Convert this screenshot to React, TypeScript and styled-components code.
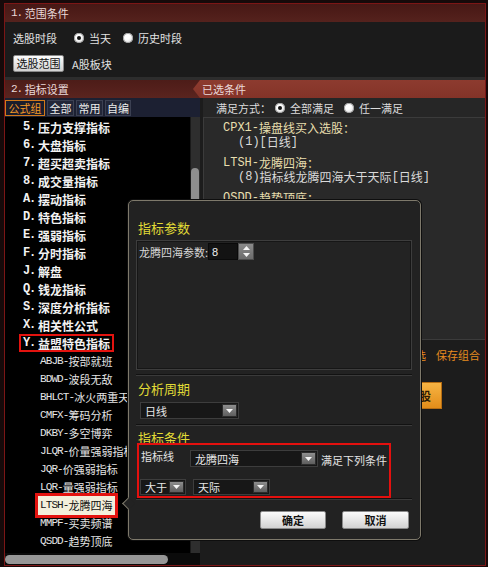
import React from "react";
import styled, { createGlobalStyle, css } from "styled-components";

const GlobalStyle = createGlobalStyle`
  html, body { margin: 0; padding: 0; background: #160a0a; }
  body {
    font-family: "Noto Sans CJK SC", "Noto Sans", sans-serif;
    font-size: 11px;
    color: #e0e0e0;
  }
  #root { width: 488px; height: 567px; }
`;

const Page = styled.div`
  width: 488px;
  height: 567px;
  box-sizing: border-box;
  padding: 3px 2px 1px 4px;
`;

const Frame = styled.div`
  position: relative;
  box-sizing: border-box;
  width: 482px;
  height: 563px;
  border: 1px solid #7c1616;
  background: #1b1b1b;
  display: flex;
  flex-direction: column;
  overflow: hidden;
`;

const SectionHeader = styled.div`
  height: 18px;
  flex: none;
  display: flex;
  align-items: center;
  padding-left: 6px;
  background: linear-gradient(#471815, #55221d);
  color: #eadada;
  font-size: 11px;
  white-space: nowrap;
`;

const Mono = styled.span<{ $ls?: number; $mr?: number }>`
  font-family: "Liberation Mono", "DejaVu Sans Mono", monospace;
  letter-spacing: ${(p) => p.$ls ?? 0}px;
  margin-right: ${(p) => p.$mr ?? 0}px;
`;

const Sec1Body = styled.div`
  height: 58px;
  flex: none;
  box-sizing: border-box;
  padding: 7px 0 0 8px;
  background: #1b1b1b;
  border-bottom: 3px solid #2d2d2d;
  display: flex;
  flex-direction: column;
  gap: 8px;
`;

const Row = styled.div<{ $h?: number }>`
  display: flex;
  align-items: center;
  height: ${(p) => p.$h ?? 18}px;
  white-space: nowrap;
  color: #e2e2e2;
`;

const Radio = styled.span<{ $checked?: boolean; $ml?: number }>`
  flex: none;
  width: 10px;
  height: 10px;
  border-radius: 50%;
  margin-left: ${(p) => p.$ml ?? 0}px;
  margin-right: 5px;
  background: radial-gradient(circle at 40% 35%, #ffffff 30%, #cfcfcf);
  box-shadow: inset 0 0 0 1px #a0a0a0;
  display: flex;
  align-items: center;
  justify-content: center;
  ${(p) =>
    p.$checked &&
    css`
      &::after {
        content: "";
        width: 4px;
        height: 4px;
        border-radius: 50%;
        background: #111;
      }
    `}
`;

const LightButton = styled.button<{ $w: number; $h?: number; $bold?: boolean }>`
  width: ${(p) => p.$w}px;
  height: ${(p) => p.$h ?? 17}px;
  box-sizing: border-box;
  padding: 0;
  border: 1px solid #8a8a8a;
  border-radius: 2px;
  background: linear-gradient(#fbfbfb, #d2d2d2);
  color: #111;
  font-family: "Noto Sans CJK SC", sans-serif;
  font-size: 11px;
  font-weight: ${(p) => (p.$bold ? 700 : 400)};
  line-height: 1;
  display: flex;
  align-items: center;
  justify-content: center;
`;

const Sec2Header = styled.div`
  height: 18px;
  flex: none;
  display: flex;
  background: linear-gradient(#4d1c18, #5a241f);
  color: #eadada;
  font-size: 11px;
`;

const LeftHead = styled.div`
  width: 182px;
  padding-left: 6px;
  display: flex;
  align-items: center;
`;

const RightTab = styled.div`
  flex: 1;
  display: flex;
  align-items: center;
  padding-left: 9px;
  background: linear-gradient(#8d3b2f, #843328);
  clip-path: polygon(7px 0, 100% 0, 100% 100%, 7px 100%, 0 50%);
`;

const Main = styled.div`
  flex: 1;
  display: flex;
  min-height: 0;
`;

const LeftPanel = styled.div`
  width: 195px;
  flex: none;
  display: flex;
  flex-direction: column;
`;

const TabRow = styled.div`
  height: 19px;
  flex: none;
  box-sizing: border-box;
  padding-top: 2px;
  display: flex;
  gap: 2px;
  background: #1c2032;
`;

const Tab = styled.div<{ $w: number; $active?: boolean }>`
  width: ${(p) => p.$w}px;
  height: 16px;
  box-sizing: border-box;
  border: 1px solid ${(p) => (p.$active ? "#d27a1a" : "#3b4052")};
  background: ${(p) => (p.$active ? "#1a1d2c" : "#222638")};
  color: ${(p) => (p.$active ? "#f39a26" : "#ececec")};
  font-size: 11px;
  line-height: 14px;
  text-align: center;
`;

const ListRow = styled.div`
  flex: 1;
  display: flex;
  min-height: 0;
`;

const List = styled.div`
  flex: 1;
  background: #000;
  overflow: hidden;
  padding-top: 1px;
`;

const Item = styled.div<{ $sub?: boolean }>`
  height: 18px;
  display: flex;
  align-items: center;
  white-space: nowrap;
  padding-left: ${(p) => (p.$sub ? 35 : 18)}px;
  font-size: ${(p) => (p.$sub ? 11 : 12)}px;
  font-weight: ${(p) => (p.$sub ? 400 : 700)};
  color: ${(p) => (p.$sub ? "#e4e4e4" : "#f2f2f2")};
`;

const RedMark = styled.span`
  display: inline-flex;
  align-items: center;
  height: 18px;
  box-sizing: border-box;
  border: 2px solid #e3130f;
  padding: 0 2px;
  margin-left: -4px;
`;

const SelectedMark = styled.span`
  display: inline-flex;
  align-items: center;
  height: 19px;
  padding: 0 2px;
  margin-left: -2px;
  background: #f3efdb;
  color: #111;
  outline: 3px solid #e3130f;
`;

const VScroll = styled.div`
  width: 10px;
  flex: none;
  background: #2e2e2e;
  box-shadow: inset 1px 0 0 #1a1a1a;
`;

const VThumb = styled.div`
  width: 8px;
  height: 80px;
  margin: 51px 0 0 1px;
  border-radius: 4px 4px 0 0;
  background: #8e8e8e;
`;

const HScroll = styled.div`
  height: 12px;
  flex: none;
  box-sizing: border-box;
  padding: 2px 0 1px 0;
  background: #0b0b0b;
`;

const HThumb = styled.div`
  width: 163px;
  height: 9px;
  border-radius: 5px;
  background: #979797;
`;

const RightPanel = styled.div`
  flex: 1;
  display: flex;
  flex-direction: column;
  padding-left: 3px;
  background: #1c1c1c;
  min-width: 0;
`;

const ModeRow = styled.div`
  height: 19px;
  flex: none;
  display: flex;
  align-items: center;
  padding-left: 13px;
  background: #262626;
  color: #dcdcdc;
  white-space: nowrap;
  font-size: 11px;
`;

const TextBox = styled.div`
  height: 223px;
  flex: none;
  box-sizing: border-box;
  background: #292929;
  border: 1px solid #3b3b3b;
  border-right: none;
  padding: 3px 0 0 19px;
  font-size: 12px;
  white-space: nowrap;
  overflow: hidden;
`;

const CondGroup = styled.div`
  margin-bottom: 7px;
`;

const CondLine = styled.div<{ $detail?: boolean }>`
  height: 14px;
  line-height: 14px;
  display: flex;
  align-items: center;
  color: ${(p) => (p.$detail ? "#dadada" : "#e8dfae")};
  padding-left: ${(p) => (p.$detail ? 15 : 0)}px;
`;

const LinksRow = styled.div`
  margin-top: 7px;
  height: 16px;
  display: flex;
  justify-content: flex-end;
  align-items: center;
  gap: 10px;
  padding-right: 5px;
  color: #e68b1f;
  font-size: 11px;
`;

const ActionRow = styled.div`
  margin-top: 19px;
  display: flex;
  justify-content: flex-end;
  padding-right: 43px;
`;

const OrangeButton = styled.div`
  width: 70px;
  height: 27px;
  box-sizing: border-box;
  border: 1px solid #b66d12;
  background: linear-gradient(#f7b443, #e38d1a);
  color: #2a1a05;
  font-size: 12px;
  font-weight: 700;
  display: flex;
  align-items: center;
  justify-content: center;
`;

/* ---------- popup ---------- */

const Popup = styled.div`
  position: absolute;
  left: 123px;
  top: 196px;
  width: 293px;
  height: 340px;
  box-sizing: border-box;
  border: 1px solid #7e796b;
  border-radius: 5px;
  background: #222222;
  box-shadow: 0 0 0 1px #0e0e0e;
  padding: 20px 8px 0 7px;
  display: flex;
  flex-direction: column;
  font-size: 11px;
  color: #e2e2e2;

  &::before {
    content: "";
    position: absolute;
    left: -5px;
    top: 298px;
    width: 8px;
    height: 8px;
    background: #222222;
    border-left: 1px solid #7e796b;
    border-bottom: 1px solid #7e796b;
    transform: rotate(45deg);
  }
`;

const PopTitle = styled.div<{ $mt?: number }>`
  height: 14px;
  line-height: 14px;
  margin: ${(p) => p.$mt ?? 0}px 0 0 2px;
  font-size: 13px;
  color: #e1db36;
`;

const ParamsBox = styled.div`
  margin-top: 5px;
  height: 130px;
  box-sizing: border-box;
  border: 1px solid #3d3d3d;
  box-shadow: inset 0 0 0 1px #161616;
  background: #232323;
  padding: 2px 0 0 2px;
`;

const ParamRow = styled.div`
  display: flex;
  align-items: center;
  height: 17px;
  color: #d6d6d6;
  white-space: nowrap;
`;

const NumInput = styled.div`
  width: 30px;
  height: 17px;
  box-sizing: border-box;
  background: #131313;
  border: 1px solid #0a0a0a;
  color: #f0f0f0;
  font-family: "Liberation Sans", sans-serif;
  font-size: 11px;
  padding-left: 3px;
  display: flex;
  align-items: center;
`;

const Spinner = styled.div`
  width: 16px;
  height: 17px;
  box-sizing: border-box;
  background: linear-gradient(#8a8a8a, #6c6c6c);
  border: 1px solid #4c4c4c;
  display: flex;
  flex-direction: column;
  align-items: center;
  justify-content: center;
  gap: 3px;
`;

const Sep = styled.div<{ $mt?: number }>`
  margin-top: ${(p) => p.$mt ?? 0}px;
  height: 2px;
  box-sizing: border-box;
  border-top: 1px solid #121212;
  border-bottom: 1px solid #3a3a3a;
  flex: none;
`;

const SelectBox = styled.div<{ $w: number; $h?: number; $mt?: number; $ml?: number }>`
  width: ${(p) => p.$w}px;
  height: ${(p) => p.$h ?? 17}px;
  margin-top: ${(p) => p.$mt ?? 0}px;
  margin-left: ${(p) => p.$ml ?? 0}px;
  flex: none;
  box-sizing: border-box;
  border: 1px solid #3d3d3d;
  background: #171717;
  padding: 0 1px 0 4px;
  display: flex;
  align-items: center;
  justify-content: space-between;
  color: #e6e6e6;
  white-space: nowrap;
`;

const DropBtn = styled.span<{ $h?: number }>`
  width: 15px;
  height: ${(p) => p.$h ?? 13}px;
  box-sizing: border-box;
  background: linear-gradient(#8e8e8e, #5e5e5e);
  border: 1px solid #2c2c2c;
  display: flex;
  align-items: center;
  justify-content: center;
`;

const CondBox = styled.div`
  margin: -2px 0 0 1px;
  width: 254px;
  height: 55px;
  box-sizing: border-box;
  border: 2px solid #e4100e;
  padding: 4px 0 0 0;
  display: flex;
  flex-direction: column;
`;

const CondRow = styled.div<{ $mt?: number }>`
  display: flex;
  align-items: center;
  margin-top: ${(p) => p.$mt ?? 0}px;
  white-space: nowrap;
`;

const CondLabel = styled.span`
  width: 51px;
  padding-left: 2px;
  box-sizing: border-box;
  align-self: flex-start;
  line-height: 14px;
`;

const TrailText = styled.span`
  margin-left: 3px;
  padding-top: 3px;
`;

const ButtonRow = styled.div`
  margin-top: 11px;
  display: flex;
  justify-content: flex-end;
  gap: 16px;
  margin-right: 3px;
`;

const Tri = ({ up }: { up?: boolean }) => (
  <svg width="7" height="4" viewBox="0 0 7 4">
    <polygon points={up ? "0,4 7,4 3.5,0" : "0,0 7,0 3.5,4"} fill="#f4f4f4" />
  </svg>
);

const Select = ({ w, h, mt, ml, label }: { w: number; h?: number; mt?: number; ml?: number; label: string }) => (
  <SelectBox $w={w} $h={h} $mt={mt} $ml={ml}>
    <span>{label}</span>
    <DropBtn $h={h ? h - 4 : 13}>
      <Tri />
    </DropBtn>
  </SelectBox>
);

const topItems: [string, string][] = [
  ["5.", "压力支撑指标"],
  ["6.", "大盘指标"],
  ["7.", "超买超卖指标"],
  ["8.", "成交量指标"],
  ["A.", "摆动指标"],
  ["D.", "特色指标"],
  ["E.", "强弱指标"],
  ["F.", "分时指标"],
  ["J.", "解盘"],
  ["Q.", "钱龙指标"],
  ["S.", "深度分析指标"],
  ["X.", "相关性公式"],
];

const subItems: [string, string][] = [
  ["ABJB-", "按部就班"],
  ["BDWD-", "波段无敌"],
  ["BHLCT-", "冰火两重天"],
  ["CMFX-", "筹码分析"],
  ["DKBY-", "多空博弈"],
  ["JLQR-", "价量强弱指标"],
  ["JQR-", "价强弱指标"],
  ["LQR-", "量强弱指标"],
  ["LTSH-", "龙腾四海"],
  ["MMPF-", "买卖频谱"],
  ["QSDD-", "趋势顶底"],
  ["SLZG-", "主力进出"],
];

export default function App() {
  return (
    <>
      <GlobalStyle />
      <Page>
        <Frame>
          <SectionHeader>
            <Mono $ls={-1}>1.</Mono>&nbsp;范围条件
          </SectionHeader>
          <Sec1Body>
            <Row>
              <span>选股时段</span>
              <Radio $checked $ml={17} />
              <span>当天</span>
              <Radio $ml={12} />
              <span>历史时段</span>
            </Row>
            <Row $h={17}>
              <LightButton $w={51}>选股范围</LightButton>
              <span style={{ marginLeft: 8 }}>A股板块</span>
            </Row>
          </Sec1Body>
          <Sec2Header>
            <LeftHead>
              <Mono $ls={-1}>2.</Mono>&nbsp;指标设置
            </LeftHead>
            <RightTab>已选条件</RightTab>
          </Sec2Header>
          <Main>
            <LeftPanel>
              <TabRow>
                <Tab $w={40} $active>
                  公式组
                </Tab>
                <Tab $w={27}>全部</Tab>
                <Tab $w={27}>常用</Tab>
                <Tab $w={26}>自编</Tab>
              </TabRow>
              <ListRow>
                <List>
                  {topItems.map(([c, t]) => (
                    <Item key={c}>
                      <Mono $ls={-1.2} $mr={3}>
                        {c}
                      </Mono>
                      {t}
                    </Item>
                  ))}
                  <Item>
                    <RedMark>
                      <Mono $ls={-1.2} $mr={3}>
                        Y.
                      </Mono>
                      益盟特色指标
                    </RedMark>
                  </Item>
                  {subItems.map(([c, t]) =>
                    c === "LTSH-" ? (
                      <Item $sub key={c}>
                        <SelectedMark>
                          <Mono $ls={-0.9}>{c}</Mono>
                          {t}
                        </SelectedMark>
                      </Item>
                    ) : (
                      <Item $sub key={c}>
                        <Mono $ls={-0.9}>{c}</Mono>
                        {t}
                      </Item>
                    )
                  )}
                </List>
                <VScroll>
                  <VThumb />
                </VScroll>
              </ListRow>
              <HScroll>
                <HThumb />
              </HScroll>
            </LeftPanel>
            <RightPanel>
              <ModeRow>
                <span>满足方式：</span>
                <Radio $checked $ml={4} />
                <span>全部满足</span>
                <Radio $ml={10} />
                <span>任一满足</span>
              </ModeRow>
              <TextBox>
                <CondGroup>
                  <CondLine>
                    <Mono>CPX1-</Mono>操盘线买入选股：
                  </CondLine>
                  <CondLine $detail>
                    <Mono>(1)[</Mono>日线<Mono>]</Mono>
                  </CondLine>
                </CondGroup>
                <CondGroup>
                  <CondLine>
                    <Mono>LTSH-</Mono>龙腾四海：
                  </CondLine>
                  <CondLine $detail>
                    <Mono>(8)</Mono>指标线龙腾四海大于天际<Mono>[</Mono>日线<Mono>]</Mono>
                  </CondLine>
                </CondGroup>
                <CondGroup>
                  <CondLine>
                    <Mono>QSDD-</Mono>趋势顶底：
                  </CondLine>
                  <CondLine $detail>
                    <Mono>(1)[</Mono>日线<Mono>]</Mono>
                  </CondLine>
                </CondGroup>
              </TextBox>
              <LinksRow>
                <span>清除所选</span>
                <span>保存组合</span>
              </LinksRow>
              <ActionRow>
                <OrangeButton>执行选股</OrangeButton>
              </ActionRow>
            </RightPanel>
          </Main>

          <Popup>
            <PopTitle>指标参数</PopTitle>
            <ParamsBox>
              <ParamRow>
                <span>龙腾四海参数:</span>
                <NumInput>8</NumInput>
                <Spinner>
                  <Tri up />
                  <Tri />
                </Spinner>
              </ParamRow>
            </ParamsBox>
            <Sep $mt={4} />
            <PopTitle $mt={6}>分析周期</PopTitle>
            <Select w={99} mt={6} ml={4} label="日线" />
            <Sep $mt={5} />
            <PopTitle $mt={5}>指标条件</PopTitle>
            <CondBox>
              <CondRow>
                <CondLabel>指标线</CondLabel>
                <Select w={128} ml={0} label="龙腾四海" />
                <TrailText>满足下列条件</TrailText>
              </CondRow>
              <CondRow $mt={11}>
                <Select w={46} h={16} ml={1} label="大于" />
                <Select w={77} h={16} ml={7} label="天际" />
              </CondRow>
            </CondBox>
            <Sep />
            <ButtonRow>
              <LightButton $w={66} $h={18} $bold>
                确定
              </LightButton>
              <LightButton $w={67} $h={18} $bold>
                取消
              </LightButton>
            </ButtonRow>
          </Popup>
        </Frame>
      </Page>
    </>
  );
}
